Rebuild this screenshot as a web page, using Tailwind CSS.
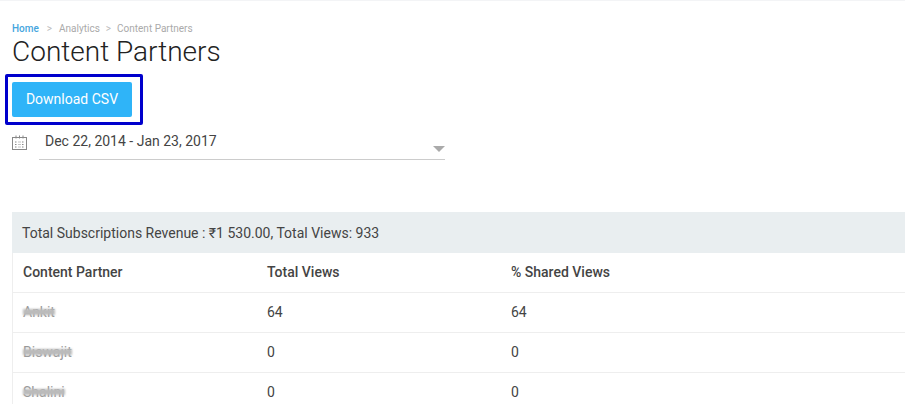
<!DOCTYPE html>
<html lang="en">
<head>
    <meta charset="UTF-8">
    <title>Content Partners</title>
    <script src="https://cdn.jsdelivr.net/npm/@tailwindcss/browser@4"></script>
</head>
<body class="bg-white h-[404px] overflow-hidden font-['Roboto',sans-serif] text-[#333]">
    <div class="border-t border-gray-100 pl-3 pt-[21px]">
        <!-- breadcrumb -->
        <div class="flex items-center text-[10px] leading-[14px] h-[14px] text-[#aaa]">
            <span class="text-[#45a5de] font-medium">Home</span>
            <span class="ml-[8px] mr-[7px] text-[#bbb]">&gt;</span>
            <span>Analytics</span>
            <span class="mx-[6px] text-[#bbb]">&gt;</span>
            <span>Content Partners</span>
        </div>
        <h1 class="text-[28px] leading-[34px] font-light text-[#222] mt-[-1px]">Content Partners</h1>

        <!-- highlighted button -->
        <div class="-ml-[7px] mt-[5px] w-[138px] h-[51px] border-[3px] border-[#0000cc] rounded-[2px] pl-1 pt-[5px]">
            <button class="w-[120px] h-[35px] pb-[2px] bg-[#2fb4f8] rounded-[2px] text-white text-sm">Download CSV</button>
        </div>

        <!-- date range -->
        <div class="flex mt-[9px]">
            <svg class="mt-px w-[16px] h-[16px] text-[#888]" viewBox="0 0 16 16" fill="none" stroke="currentColor" stroke-width="1">
                <rect x="0.5" y="2.5" width="14" height="12" />
                <path d="M4 0.5v3M7.5 0.5v3M11 0.5v3" />
                <path d="M3 7h2M6.5 7h2M10 7h2M3 9.5h2M6.5 9.5h2M10 9.5h2M3 12h2M6.5 12h2M10 12h2" stroke-dasharray="1 0.5" />
            </svg>
            <div class="relative ml-[11px] w-[406px] h-[26px] border-b border-[#ccc] pl-[6px] text-sm leading-[14px]">
                <span class="text-[#444]">Dec 22, 2014 - Jan 23, 2017</span>
                <div class="absolute right-0 top-[12px] w-0 h-0 border-x-[6px] border-x-transparent border-t-[6px] border-t-[#aaa]"></div>
            </div>
        </div>

        <!-- table -->
        <div class="mt-[52px] border-l border-[#eee] text-sm text-[#444]">
            <div class="h-[41px] flex items-center bg-[#e9eef0] pl-[10px] -ml-px">Total Subscriptions Revenue : ₹1 530.00, Total Views: 933</div>
            <div class="h-[40px] grid grid-cols-[244px_244px_1fr] items-center pl-[10px] pb-px border-b border-[#eee] font-medium">
                <span>Content Partner</span><span>Total Views</span><span>% Shared Views</span>
            </div>
            <div class="h-[40px] grid grid-cols-[244px_244px_1fr] items-center pl-[10px] pb-px border-b border-[#eee]">
                <span class="relative w-fit text-[#999]">Ankit<i class="absolute left-0 right-0 top-[7px] h-[6px] bg-[#bbb] blur-[1px]"></i></span><span>64</span><span>64</span>
            </div>
            <div class="h-[40px] grid grid-cols-[244px_244px_1fr] items-center pl-[10px] pb-px border-b border-[#eee]">
                <span class="relative w-fit text-[#999]">Biswajit<i class="absolute left-0 right-0 top-[7px] h-[6px] bg-[#bbb] blur-[1px]"></i></span><span>0</span><span>0</span>
            </div>
            <div class="h-[40px] grid grid-cols-[244px_244px_1fr] items-center pl-[10px] pb-[2px]">
                <span class="relative w-fit text-[#999]">Shalini<i class="absolute left-0 right-0 top-[7px] h-[6px] bg-[#bbb] blur-[1px]"></i></span><span>0</span><span>0</span>
            </div>
        </div>
    </div>
</body>
</html>
